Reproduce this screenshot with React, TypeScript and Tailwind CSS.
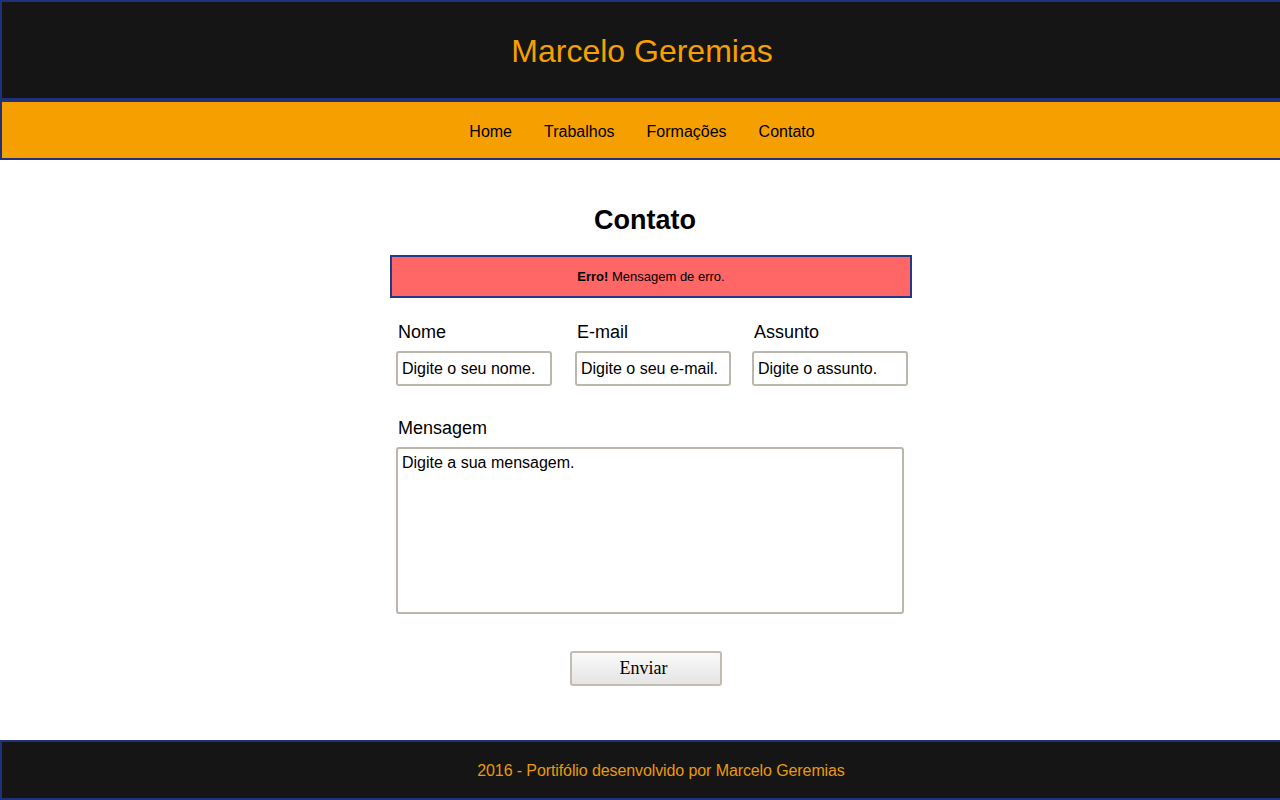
import React from 'react';

const navItems = ['Home', 'Trabalhos', 'Formações', 'Contato'];

export default function App() {
    return (
        <div className="min-h-[800px] bg-white font-['Liberation_Sans',Arial,sans-serif] text-black overflow-x-hidden">
            {/* Header */}
            <header className="w-[calc(100%+4px)] h-[100px] border-2 border-[#1f3178] bg-[#151515] flex items-center justify-center pt-[2px]">
                <h1 className="text-[32px] leading-[36px] text-[#f5a000]">Marcelo Geremias</h1>
            </header>

            {/* Nav */}
            <nav className="w-[calc(100%+4px)] h-[60px] border-2 border-[#1f3178] bg-[#f5a000] flex items-center justify-center gap-8 pt-[4px]">
                {navItems.map((item) => (
                    <a key={item} href="#" className="text-[16px] leading-5 text-black">
                        {item}
                    </a>
                ))}
            </nav>

            {/* Content */}
            <main className="ml-[390px] w-[522px] pt-[44px] pb-[54px]">
                <h2 className="text-[27px] leading-[32px] font-bold text-center pr-[12px]">Contato</h2>

                <div className="mt-[19px] h-[43px] border-2 border-[#243a86] bg-[#ff6666] flex items-center justify-center text-[13px]">
                    <span>
                        <b>Erro!</b> Mensagem de erro.
                    </span>
                </div>

                <div className="mt-[23px] ml-[6px] flex">
                    {[
                        { label: 'Nome', ph: 'Digite o seu nome.', w: 'w-[179px]' },
                        { label: 'E-mail', ph: 'Digite o seu e-mail.', w: 'w-[177px]' },
                        { label: 'Assunto', ph: 'Digite o assunto.', w: 'w-[156px]' },
                    ].map((f) => (
                        <div key={f.label} className={f.w}>
                            <label className="block pl-[2px] text-[18px] leading-[22px]">{f.label}</label>
                            <input
                                type="text"
                                placeholder={f.ph}
                                className="mt-[8px] w-[156px] h-[35px] border-2 border-[#bcb6ac] rounded-[3px] px-[4px] pt-[1px] text-[16px] placeholder:text-black outline-none"
                            />
                        </div>
                    ))}
                </div>

                <div className="mt-[31px] ml-[6px]">
                    <label className="block pl-[2px] text-[18px] leading-[22px]">Mensagem</label>
                    <textarea
                        placeholder="Digite a sua mensagem."
                        className="mt-[8px] block w-[508px] h-[167px] border-2 border-[#bcb6ac] rounded-[3px] px-[4px] py-[4px] text-[16px] leading-[20px] placeholder:text-black resize-none outline-none"
                    />
                </div>

                <button className="mt-[37px] ml-[180px] block w-[152px] h-[35px] border-2 border-[#c2bcb2] rounded-[3px] bg-gradient-to-b from-[#fafafa] to-[#e4e4e4] font-['Liberation_Serif','Times_New_Roman',serif] text-[18px] text-black pr-[5px]">
                    Enviar
                </button>
            </main>

            {/* Footer */}
            <footer className="w-[calc(100%+4px)] h-[60px] border-2 border-[#1f3178] bg-[#151515] flex items-center justify-center pl-[38px] pt-[2px]">
                <p className="text-[16px] tracking-[-0.1px] text-[#e89a0c]">2016 - Portifólio desenvolvido por Marcelo Geremias</p>
            </footer>
        </div>
    );
}
